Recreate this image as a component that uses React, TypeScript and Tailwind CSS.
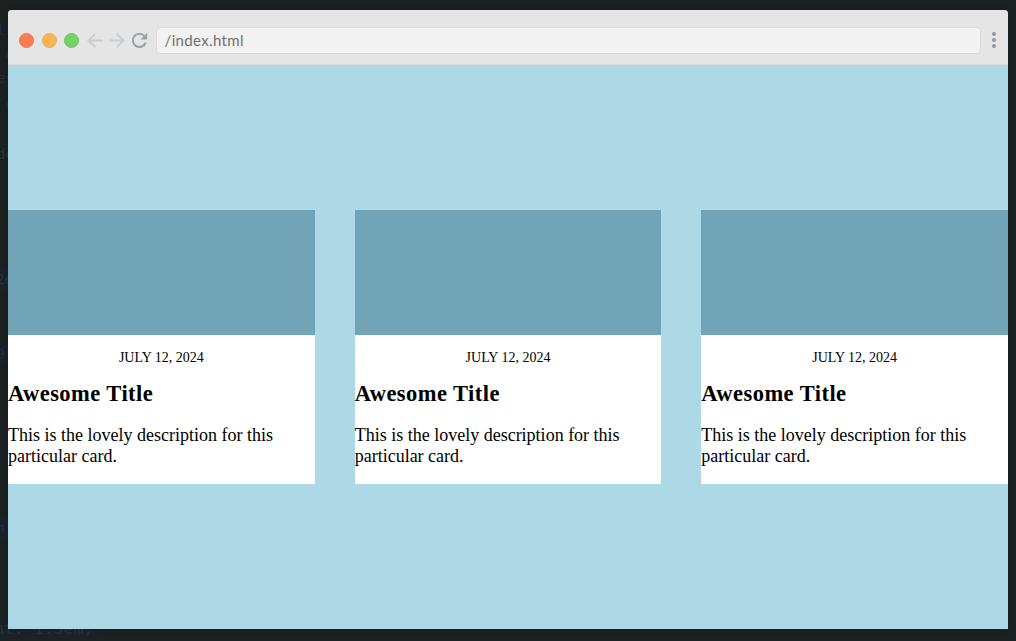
const cards = [1, 2, 3];

const fragments = [
  { text: "l", cls: "top-[19px] -left-[3px] text-[#1d3040]" },
  { text: "a", cls: "top-[42px] left-[5px] text-[#293136]" },
  { text: "es", cls: "top-[67px] -left-[3px] text-[#293136]" },
  { text: "c", cls: "top-[93px] left-[5px] text-[#24303a]" },
  { text: "do", cls: "top-[143px] -left-[3px] text-[#293136]" },
  { text: "2e", cls: "top-[268px] -left-[4px] bg-[#1b232a] text-[#28323a]" },
  { text: "0", cls: "top-[343px] -left-[4px] bg-[#1b232a] text-[#28323a]" },
  { text: "n", cls: "top-[517px] -left-[4px] bg-[#1b232a] text-[#28323a]" },
];

function BackArrow({ flip = false }: { flip?: boolean }) {
  return (
    <svg
      className={flip ? "h-[15px] w-[16px] rotate-180" : "h-[15px] w-[16px]"}
      viewBox="0 0 16 15"
      fill="none"
      stroke="#c7ccd0"
      strokeWidth="1.9"
    >
      <path d="M15.5 7.5H1.8M8.2 0.8L1.5 7.5L8.2 14.2" />
    </svg>
  );
}

function Toolbar() {
  return (
    <div className="flex h-[55px] shrink-0 items-center border-b border-[#d8d8d8] bg-[#e5e5e5] pt-[7px] pl-[11px]">
      <div className="flex gap-[7.5px]">
        <div className="size-[15px] rounded-full border border-[#f0714a] bg-[#fc7b53]" />
        <div className="size-[15px] rounded-full border border-[#eeaa4d] bg-[#fbb454]" />
        <div className="size-[15px] rounded-full border border-[#6bc75f] bg-[#73d367]" />
      </div>
      <div className="ml-[7.5px] flex gap-[6px]">
        <BackArrow />
        <BackArrow flip />
      </div>
      <svg className="ml-[6.5px] size-[17px]" viewBox="0 0 17 17" fill="none">
        <path d="M13.4 3.9A6.6 6.6 0 1 0 14.7 10.6" stroke="#98a2a9" strokeWidth="2.1" />
        <path d="M16.2 0.8V7.4H9.4Z" fill="#98a2a9" />
      </svg>
      <div className="ml-[7.5px] flex h-[27px] w-[825px] items-center rounded-[4px] border border-[#dadada] bg-[#f2f2f2] pl-[8px] font-['Lato',sans-serif] text-[15px] text-[#707070]">
        <span className="tracking-[0.35px]">/index.html</span>
      </div>
      <div className="mb-px ml-[11px] flex flex-col gap-[2px]">
        <div className="size-[4px] rounded-full bg-[#8d9aa4]" />
        <div className="size-[4px] rounded-full bg-[#8d9aa4]" />
        <div className="size-[4px] rounded-full bg-[#8d9aa4]" />
      </div>
    </div>
  );
}

function Card() {
  return (
    <article className="h-[274px] bg-white">
      <div className="h-[125px] bg-[#70a4b6]" />
      <p className="mt-[15px] text-center text-[14px] leading-[16px]">JULY 12, 2024</p>
      <h2 className="mt-[15px] text-[22.5px] leading-[26px] font-bold tracking-[0.45px]">Awesome Title</h2>
      <p className="mt-[18px] text-[18px] leading-[21px]">
        This is the lovely description for this particular card.
      </p>
    </article>
  );
}

export default function App() {
  return (
    <div className="relative h-[641px] w-[1016px] overflow-hidden bg-[#1c2121] px-[8px] pt-[10px] pb-[12px]">
      <div className="absolute inset-0 font-['DejaVu_Sans_Mono',monospace] text-[14px] leading-[22px]">
        {fragments.map((item) => (
          <span key={item.cls} className={`absolute w-[20px] whitespace-pre ${item.cls}`}>
            {item.text}
          </span>
        ))}
        <div className="absolute top-[615px] left-0 h-[25px] w-[102px] bg-[#1b2228]" />
        <span className="absolute top-[618px] -left-[6px] text-[16.5px] whitespace-pre text-[#2c3438]">nt: 1.5em;</span>
      </div>
      <main className="relative flex h-[619px] flex-col overflow-hidden rounded-t-[4px] bg-[#add8e6] shadow-[0_0_10px_rgba(0,0,0,0.15)]">
        <Toolbar />
        <div className="grid flex-1 grid-cols-3 content-center gap-[40px] font-['Liberation_Serif',serif] text-black">
          {cards.map((card) => (
            <Card key={card} />
          ))}
        </div>
      </main>
    </div>
  );
}
